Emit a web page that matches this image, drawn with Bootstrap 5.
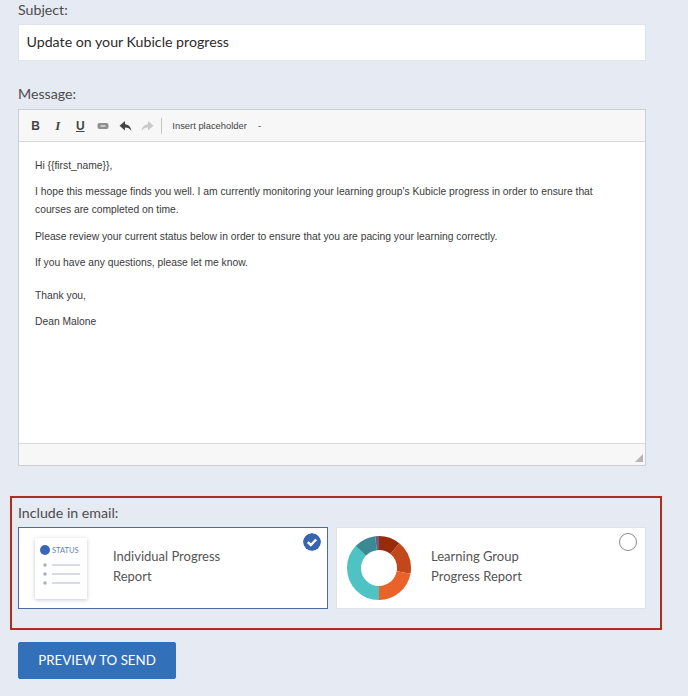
<!DOCTYPE html>
<html lang="en">
<head>
<meta charset="utf-8">
<title>Email</title>
<link href="https://cdn.jsdelivr.net/npm/bootstrap@5.3.0/dist/css/bootstrap.min.css" rel="stylesheet">
<style>
html,body{height:100%}
body{background:#e6eaf2;font-family:Lato,"Liberation Sans",sans-serif;color:#4a4a4a;overflow:hidden}
.pg{width:688px;height:696px;padding:0 42px 0 18px}
.fld-label{font-size:14.2px;line-height:18px;color:#4c4c4c;margin:0}
.subj-label{height:24px;padding-top:1px}
.subj{height:36.500px;background:#fff;border:1px solid #dfe3ea;font-size:14.200px;color:#2b2b2b;padding:0 7.500px;line-height:34px;border-radius:0}
.msg-label{margin-top:24.500px;height:24px}
.ed{height:356.500px;border:1px solid #ccd0d6;background:#fff}
.ed-bar{height:32px;background:#f7f7f7;border-bottom:1px solid #d9d9d9;padding-left:7px;color:#3c3c3c}
.tb{width:19px;height:20px;font:700 12px/20px "Liberation Sans",sans-serif;text-align:center;margin-right:3.400px;color:#444}
.tb.it{font-style:italic;font-family:"Liberation Serif",serif;font-size:13px}
.tb.un{text-decoration:underline}
.tb svg{display:block;margin:4px auto 0}
.sep{width:1px;height:16px;background:#c4c4c4;margin:0 10px 0 1px}
.ph{font:9.400px "Liberation Sans",Roboto,sans-serif;color:#444;margin-right:11px}
.ed-body{flex:1 1 auto;font:10.300px/18px "Liberation Sans",sans-serif;color:#3a3a3a;padding:15px 22px 0 16px}
.ed-body p{margin:0 0 8.300px}
.ed-body p.gap-after{margin-bottom:15px}
.ed-foot{height:22px;background:#f7f7f7;border-top:1px solid #d9d9d9}
.rsz{width:0;height:0;border-left:8px solid transparent;border-bottom:8px solid #b5b5b5;margin:0 2px 3px 0}
.inc{margin:30.500px -16px 0 -8px;height:134px;border:2px solid #a8301f;box-shadow:0 0 0 1px #f6dfe8;padding:6px 6px 0}
.inc-label{height:23px}
.opt{height:82px;width:310px;background:#fff;border:1px solid #dfe3ea;color:#555;font-size:13px;line-height:20px}
.opt.on{border-color:#4a6ba6}
.opt-txt{padding-bottom:4px}
.thumb{width:52px;height:61px;background:#fff;box-shadow:0 1px 4px rgba(90,100,120,.35);margin:0 26px 0 16px;padding-top:6px}
.rad{position:absolute;top:5px;right:6px;width:18px;height:18px;border-radius:50%}
.rad.off{border:1px solid #8c8c8c;background:#fff;right:8px}
.donut{margin:0 20px 0 10px}
.go{margin-top:12px;width:158px;height:37px;background:#3270ba;border:1px solid #3270ba;color:#fff;border-radius:2px;font-size:13.300px;padding:0;font-family:Lato,sans-serif}
.go:hover{background:#3270ba;color:#fff}
</style>
</head>
<body>
<div class="pg">
  <div class="fld-label subj-label">Subject:</div>
  <div class="subj">Update on your Kubicle progress</div>
  <div class="fld-label msg-label">Message:</div>
  <div class="ed d-flex flex-column">
    <div class="ed-bar d-flex align-items-center flex-shrink-0">
      <span class="tb">B</span><span class="tb it">I</span><span class="tb un">U</span>
      <span class="tb"><svg width="12" height="12" viewBox="0 0 12 12"><rect x="0.500" y="3" width="11" height="6" rx="2" fill="#8f8f8f"/><rect x="3.500" y="5.300" width="5" height="1.400" fill="#e0e0e0"/></svg></span>
      <span class="tb"><svg width="13" height="12" viewBox="0 0 13 12"><path d="M6 1 0.500 5.800 6 10.500V7.500c3 0 4.900 1 6.300 3.500C12 7 9.800 4.500 6 4.200z" fill="#444"/></svg></span>
      <span class="tb"><svg width="13" height="12" viewBox="0 0 13 12"><path d="M7 1 12.500 5.800 7 10.500V7.500c-3 0-4.900 1-6.300 3.500C1 7 3.200 4.500 7 4.200z" fill="#c9c9c9"/></svg></span>
      <span class="sep"></span>
      <span class="ph">Insert placeholder</span><span class="ph">-</span>
    </div>
    <div class="ed-body">
      <p>Hi {{first_name}},</p>
      <p>I hope this message finds you well. I am currently monitoring your learning group's Kubicle progress in order to ensure that courses are completed on time.</p>
      <p>Please review your current status below in order to ensure that you are pacing your learning correctly.</p>
      <p class="gap-after">If you have any questions, please let me know.</p>
      <p>Thank you,</p>
      <p>Dean Malone</p>
    </div>
    <div class="ed-foot d-flex justify-content-end align-items-end flex-shrink-0"><span class="rsz"></span></div>
  </div>
  <div class="inc">
    <div class="fld-label inc-label">Include in email:</div>
    <div class="d-flex gap-2">
      <div class="opt on position-relative d-flex align-items-center flex-shrink-0">
        <div class="thumb flex-shrink-0">
          <svg width="52" height="50" viewBox="0 0 52 50" class="d-block">
            <circle cx="10" cy="6" r="5" fill="#3a66b8"/>
            <text x="17" y="9" font-size="7.500" font-family="Lato,sans-serif" fill="#5f7fb8">STATUS</text>
            <g fill="#a9b0c2"><circle cx="10" cy="21" r="1.800"/><circle cx="10" cy="30" r="1.800"/><circle cx="10" cy="39" r="1.800"/></g>
            <g stroke="#b4bac9" stroke-width="1.200"><path d="M17 21h28M17 30h28M17 39h28"/></g>
          </svg>
        </div>
        <div class="opt-txt">Individual Progress<br>Report</div>
        <svg class="rad" viewBox="0 0 18 18"><circle cx="9" cy="9" r="9" fill="#3766b1"/><path d="M4.800 9.200 7.800 12 13.200 6.500" fill="none" stroke="#fff" stroke-width="2.400"/></svg>
      </div>
      <div class="opt position-relative d-flex align-items-center flex-shrink-0">
        <svg class="donut flex-shrink-0" width="64" height="64" viewBox="0 0 64 64">
          <g fill="none" stroke-width="14" transform="rotate(-90 32 32)">
            <circle cx="32" cy="32" r="25" pathLength="100" stroke="#4fc3c4" stroke-dasharray="37 63" stroke-dashoffset="-50"/>
            <circle cx="32" cy="32" r="25" pathLength="100" stroke="#3a8a94" stroke-dasharray="11 89" stroke-dashoffset="-87"/>
            <circle cx="32" cy="32" r="25" pathLength="100" stroke="#6a5f80" stroke-dasharray="2 98" stroke-dashoffset="-98"/>
            <circle cx="32" cy="32" r="25" pathLength="100" stroke="#962c0c" stroke-dasharray="11 89"/>
            <circle cx="32" cy="32" r="25" pathLength="100" stroke="#c2471b" stroke-dasharray="17 83" stroke-dashoffset="-11"/>
            <circle cx="32" cy="32" r="25" pathLength="100" stroke="#e9622a" stroke-dasharray="22 78" stroke-dashoffset="-28"/>
          </g>
        </svg>
        <div class="opt-txt">Learning Group<br>Progress Report</div>
        <span class="rad off"></span>
      </div>
    </div>
  </div>
  <button type="button" class="btn go d-block">PREVIEW TO SEND</button>
</div>
</body>
</html>
